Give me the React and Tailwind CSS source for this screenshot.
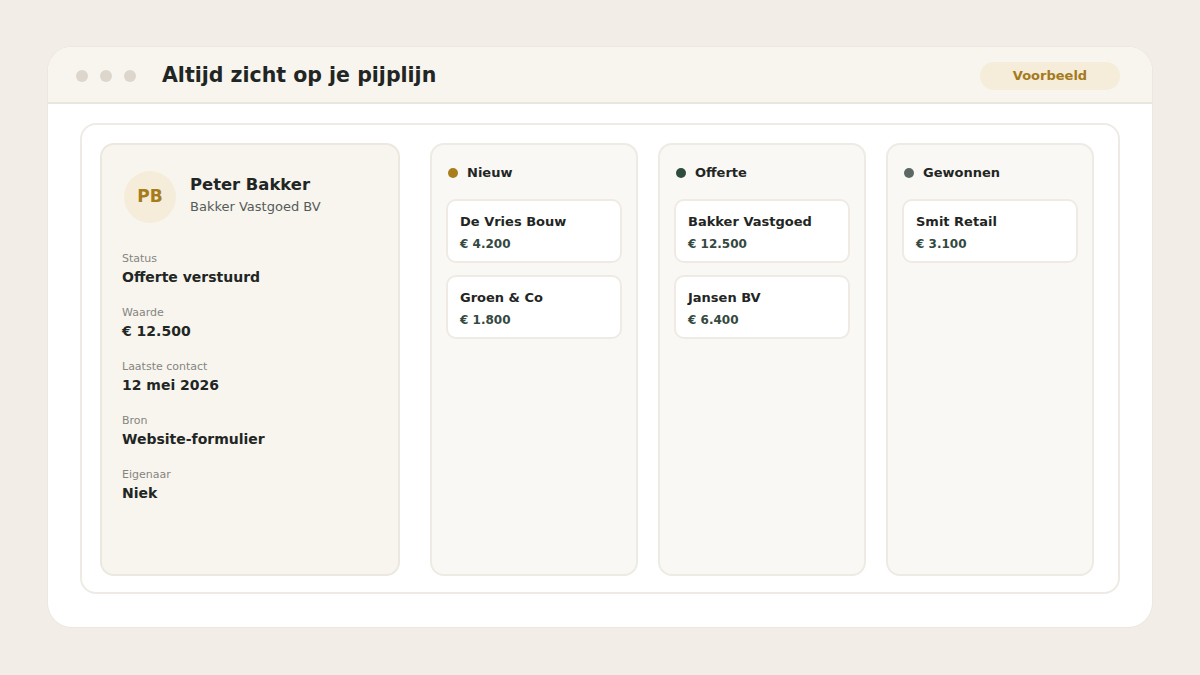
const font = { fontFamily: '"DejaVu Sans", "Liberation Sans", sans-serif' };

const details = [
  { label: 'Status', value: 'Offerte verstuurd' },
  { label: 'Waarde', value: '€ 12.500' },
  { label: 'Laatste contact', value: '12 mei 2026' },
  { label: 'Bron', value: 'Website-formulier' },
  { label: 'Eigenaar', value: 'Niek' },
];

const columns = [
  {
    name: 'Nieuw',
    dot: 'bg-[#a97d1b]',
    deals: [
      { title: 'De Vries Bouw', amount: '€ 4.200' },
      { title: 'Groen & Co', amount: '€ 1.800' },
    ],
  },
  {
    name: 'Offerte',
    dot: 'bg-[#2f4d3f]',
    deals: [
      { title: 'Bakker Vastgoed', amount: '€ 12.500' },
      { title: 'Jansen BV', amount: '€ 6.400' },
    ],
  },
  {
    name: 'Gewonnen',
    dot: 'bg-[#5d6866]',
    deals: [{ title: 'Smit Retail', amount: '€ 3.100' }],
  },
];

function DealCard({ title, amount }) {
  return (
    <div className="h-[64px] rounded-[10px] border-2 border-[#efebe4] bg-white px-[12px] pt-[12px]">
      <div className="text-[13px] font-bold leading-[18px] text-[#1f2624]">{title}</div>
      <div className="mt-[5px] text-[12px] font-bold leading-[16px] text-[#34493f]">{amount}</div>
    </div>
  );
}

function Column({ name, dot, deals }) {
  return (
    <div className="h-[433px] w-[208px] rounded-[14px] border-2 border-[#eeebe5] bg-[#f9f8f4] px-[14px] pt-[20px]">
      <div className="flex items-center gap-[9px] pl-[2px]">
        <span className={`h-[10px] w-[10px] rounded-full ${dot}`} />
        <span className="text-[13px] font-bold leading-[16px] text-[#1f2624]">{name}</span>
      </div>
      <div className="mt-[18px] flex flex-col gap-[12px]">
        {deals.map((d) => (
          <DealCard key={d.title} {...d} />
        ))}
      </div>
    </div>
  );
}

export default function App() {
  return (
    <div className="min-h-[675px] bg-[#f2eee7] pt-[47px] pl-[48px]" style={font}>
      <div className="w-[1104px] h-[580px] overflow-hidden rounded-[24px] bg-white shadow-[0_0_0_1px_#ece7df]">
        {/* window bar */}
        <div className="flex h-[57px] items-center border-b-2 border-[#ebe6dd] bg-[#f8f5ee] pl-[28px] pr-[32px] pt-[2px]">
          <div className="flex gap-[12px]">
            <span className="h-[12px] w-[12px] rounded-full bg-[#dcd6cc]" />
            <span className="h-[12px] w-[12px] rounded-full bg-[#dcd6cc]" />
            <span className="h-[12px] w-[12px] rounded-full bg-[#dcd6cc]" />
          </div>
          <h1 className="ml-[26px] text-[20.5px] font-bold text-[#1f2624]">Altijd zicht op je pijplijn</h1>
          <span className="ml-auto flex h-[28px] w-[140px] items-center justify-center rounded-full bg-[#f5ecda] text-[13px] font-bold text-[#a47a1a]">
            Voorbeeld
          </span>
        </div>

        <div className="px-[32px] pt-[19px]">
          <div className="flex h-[471px] rounded-[16px] border-2 border-[#eeebe5] px-[18px] pt-[18px]">
            {/* contact card */}
            <div className="h-[433px] w-[300px] rounded-[14px] border-2 border-[#ece8e0] bg-[#f8f5ef] pl-[20px] pt-[26px]">
              <div className="ml-[2px] flex items-start">
                <div className="flex h-[52px] w-[52px] items-center justify-center rounded-full bg-[#f5ecda] text-[17px] font-bold text-[#a67c1b]">
                  PB
                </div>
                <div className="ml-[14px] mt-[4px]">
                  <div className="text-[16.4px] font-bold leading-[20px] text-[#1f2624]">Peter Bakker</div>
                  <div className="mt-[4px] text-[13px] leading-[16px] text-[#555b58]">Bakker Vastgoed BV</div>
                </div>
              </div>
              <div className="mt-[29px] flex flex-col gap-[20px]">
                {details.map((d) => (
                  <div key={d.label}>
                    <div className="text-[11px] leading-[14px] text-[#85857f]">{d.label}</div>
                    <div className="mt-[2px] text-[14px] font-bold leading-[18px] text-[#1f2624]">{d.value}</div>
                  </div>
                ))}
              </div>
            </div>

            <div className="ml-[30px] flex gap-[20px]">
              {columns.map((c) => (
                <Column key={c.name} {...c} />
              ))}
            </div>
          </div>
        </div>
      </div>
    </div>
  );
}
